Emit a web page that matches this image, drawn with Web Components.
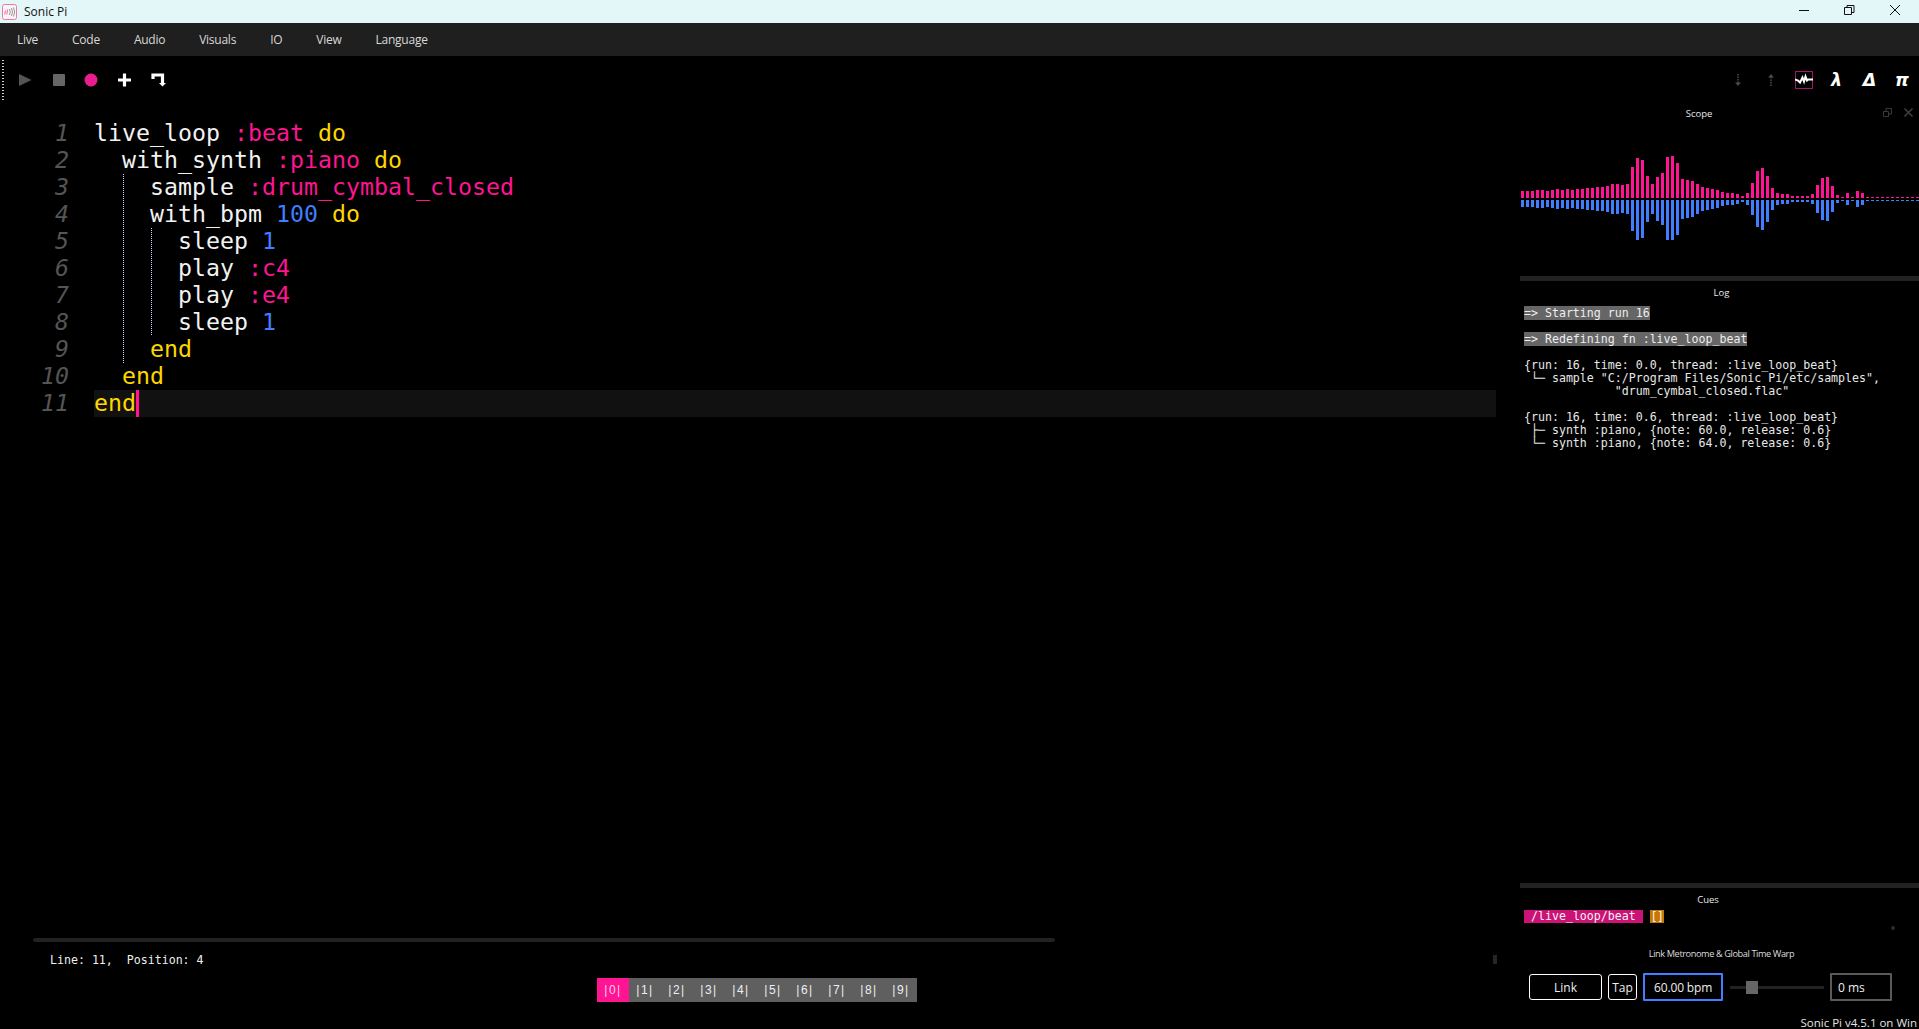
<!DOCTYPE html>
<html><head><meta charset="utf-8"><title>Sonic Pi</title>
<style>
html,body{margin:0;padding:0;height:100%;background:#000;overflow:hidden}
body{font-family:"Open Sans","Noto Sans",sans-serif}
</style></head><body>
<sp-app>
  <sp-titlebar slot="title">Sonic Pi</sp-titlebar>
  <sp-menubar slot="menu"><sp-menu>Live</sp-menu><sp-menu>Code</sp-menu><sp-menu>Audio</sp-menu><sp-menu>Visuals</sp-menu><sp-menu>IO</sp-menu><sp-menu>View</sp-menu><sp-menu>Language</sp-menu></sp-menubar>
  <sp-toolbar slot="tools"></sp-toolbar>
  <sp-editor slot="main">
    <sp-line n="1">live_loop <sp-tok k="sym">:beat</sp-tok> <sp-tok k="kw">do</sp-tok></sp-line>
    <sp-line n="2">  with_synth <sp-tok k="sym">:piano</sp-tok> <sp-tok k="kw">do</sp-tok></sp-line>
    <sp-line n="3">    sample <sp-tok k="sym">:drum_cymbal_closed</sp-tok></sp-line>
    <sp-line n="4">    with_bpm <sp-tok k="num">100</sp-tok> <sp-tok k="kw">do</sp-tok></sp-line>
    <sp-line n="5">      sleep <sp-tok k="num">1</sp-tok></sp-line>
    <sp-line n="6">      play <sp-tok k="sym">:c4</sp-tok></sp-line>
    <sp-line n="7">      play <sp-tok k="sym">:e4</sp-tok></sp-line>
    <sp-line n="8">      sleep <sp-tok k="num">1</sp-tok></sp-line>
    <sp-line n="9">    <sp-tok k="kw">end</sp-tok></sp-line>
    <sp-line n="10">  <sp-tok k="kw">end</sp-tok></sp-line>
    <sp-line n="11" active><sp-tok k="kw">end</sp-tok></sp-line>
  </sp-editor>
  <sp-side slot="side">
    <sp-scope></sp-scope>
    <sp-log></sp-log>
    <sp-cues></sp-cues>
    <sp-metronome></sp-metronome>
    <sp-version>Sonic Pi v4.5.1 on Win</sp-version>
  </sp-side>
</sp-app>
<script>
const MONO='"DejaVu Sans Mono","Liberation Mono",monospace';
const UI='"Open Sans","Noto Sans",sans-serif';
function def(name,html,init){
  customElements.define(name,class extends HTMLElement{
    constructor(){super();const t=document.createElement('template');t.innerHTML=html;
      this.attachShadow({mode:'open'}).appendChild(t.content.cloneNode(true));}
    connectedCallback(){if(init&&!this._i){this._i=1;init.call(this,this.shadowRoot);}}
  });
}
def('sp-app',`<style>
:host{display:grid;width:1919px;height:1029px;grid-template-columns:1520px 399px;grid-template-rows:23px 33px 48px 925px;background:#000;overflow:hidden}
::slotted([slot=title]),::slotted([slot=menu]),::slotted([slot=tools]){grid-column:1/3}
</style><slot name="title"></slot><slot name="menu"></slot><slot name="tools"></slot><slot name="main"></slot><slot name="side"></slot>`);

def('sp-titlebar',`<style>
:host{display:flex;align-items:center;background:#e4f7f8;color:#111;font:12px ${UI};height:23px}
.i{margin-left:2px;margin-right:7px;width:15px;height:16px;display:block;flex:none}
.t{flex:1}
svg{display:block}
</style>
<svg class="i" viewBox="0 0 15 16"><rect x=".5" y=".5" width="14" height="15" rx="2" fill="#fdf2f6" stroke="#e67ba6"/><path d="M3.500 6.500l-.8 4M5.600 5.500l-.8 5" stroke="#f06aa0" fill="none"/><path d="M7.500 5q1.500 3 0 6M9.500 4q2 4 0 8M11.500 3.500q2.400 4.500 0 9" stroke="#999" fill="none"/></svg>
<span class="t"><slot></slot></span>
<svg width="119" height="23" viewBox="0 0 119 23" fill="none" stroke="#111" stroke-width="1"><path d="M0 10.500h10"/><path d="M45.500 7.500h7v7h-7zM48 7V5.500h7v7h-2"/><path d="M91 5l10 10M101 5l-10 10"/></svg><span style="width:1px"></span>`);

def('sp-menubar',`<style>:host{display:flex;align-items:center;background:#1f1f1f;height:33px;padding-left:17px;gap:34px}</style><slot></slot>`);
def('sp-menu',`<style>:host{display:block;color:#d8d8d8;font:12px ${UI};letter-spacing:-.25px}</style><slot></slot>`);

def('sp-toolbar',`<style>
:host{display:flex;align-items:center;height:48px;position:relative}
.h{width:2px;height:41px;margin-left:2px;margin-right:15px;background:repeating-linear-gradient(#ccc 0 1px,#000 1px 3px)}
.l{display:flex;align-items:center;gap:0;flex:1}
svg{display:block}
.r{display:flex;align-items:center}
.g{font:italic bold 17.500px "DejaVu Sans",sans-serif;color:#fff;width:33px;text-align:center;line-height:17px}
</style>
<span class="h"></span>
<div class="l">
<svg width="150" height="16" viewBox="0 .5 150 16">
<path d="M0 2.500L12.500 8.500 0 14.500z" fill="#555"/>
<rect x="34" y="2.500" width="12" height="12" rx="1" fill="#666"/>
<circle cx="72" cy="8.500" r="6.500" fill="#e91e8c"/>
<path d="M99 8.500h13M105.500 2v13" stroke="#fff" stroke-width="3.200" fill="none"/>
<path d="M134 7.500V3.500h9.500v9" stroke="#fff" stroke-width="3.200" fill="none"/><path d="M140 11.500h7l-3.500 3.500z" fill="#fff"/>
</svg>
</div>
<div class="r">
<svg width="12" height="14" viewBox="0 0 12 14" style="margin-right:21px"><path d="M6 1v9" stroke="#4a4a4a" stroke-width="1.500" stroke-dasharray="1.500 1"/><path d="M3 9.500h6L6 13z" fill="#4a4a4a"/></svg>
<svg width="12" height="14" viewBox="0 0 12 14" style="margin-right:18px"><path d="M6 4v9" stroke="#4a4a4a" stroke-width="1.500" stroke-dasharray="1.500 1"/><path d="M3 4.500h6L6 1z" fill="#4a4a4a"/></svg>
<svg width="18" height="18" viewBox="0 0 18 18" style="margin-right:7px"><rect x=".5" y=".5" width="17" height="17" fill="none" stroke="#a5176f"/><path d="M0 8.500l3 1 2 2 2.500-5 1.500 4 1.500-5 1.500 4 1-1h5" fill="none" stroke="#fff" stroke-width="2"/></svg>
<span class="g">&#955;</span><span class="g">&#916;</span><span class="g" style="width:32px">&#960;</span>
<span style="width:1px"></span>
</div>`);

def('sp-editor',`<style>
:host{display:flex;flex-direction:column;min-width:0;height:925px;color:#f2f2f2}
.code{position:relative;padding:16px 24px 0 0;flex:1}
.guide{position:absolute;width:0;border-left:1px dotted #d0dcff}
.bar{height:4px;width:1022px;margin-left:33px;background:#222;border-radius:2px}
.st{font:11.600px/13px ${MONO};color:#eee;white-space:pre;margin:12px 0 0 50px;height:24px;display:flex}
.st span:first-child{flex:1}
.tabs{display:flex;align-items:center;margin-left:597px;height:24px;margin-bottom:27px;width:320px}
.hd{width:4px;height:9px;background:#262626;margin-right:23px;margin-top:1px}
</style>
<div class="code"><slot></slot>
<span class="guide" style="left:123px;top:70px;height:189px"></span>
<span class="guide" style="left:151px;top:124px;height:107px"></span>
</div>
<div class="bar"></div>
<div class="st"><span>Line: 11,  Position: 4</span><span class="hd"></span></div>
<div class="tabs"><sp-tab active>0</sp-tab><sp-tab>1</sp-tab><sp-tab>2</sp-tab><sp-tab>3</sp-tab><sp-tab>4</sp-tab><sp-tab>5</sp-tab><sp-tab>6</sp-tab><sp-tab>7</sp-tab><sp-tab>8</sp-tab><sp-tab>9</sp-tab></div>`);

def('sp-tab',`<style>
:host{display:block;width:32px;height:24px;background:#5f5f5f;color:#eee;text-align:center;font:12px/24px "Liberation Sans",sans-serif;letter-spacing:1.500px}
:host([active]){background:#ff1493;color:#ffd0e8}
</style>|<slot></slot>|`);

def('sp-line',`<style>
:host{display:flex;height:27px;font:23.250px/25px ${MONO};white-space:pre}
.n{width:69px;margin-right:25px;text-align:right;font-style:italic;color:#555;flex:none}
.c{flex:1;position:relative}
:host([active]) .c{background:#111}
.cur{display:none}
:host([active]) .cur{display:inline-block;width:2.500px;height:27px;background:#ff1493;vertical-align:top}
</style><span class="n"></span><span class="c"><slot></slot><span class="cur"></span></span>`,function(s){s.querySelector('.n').textContent=this.getAttribute('n');});

def('sp-tok',`<style>:host{display:inline}
:host([k=sym]){color:#ff1493}
:host([k=kw]){color:#ffd700}
:host([k=num]){color:#3f7fff}
</style><slot></slot>`);

def('sp-side',`<style>:host{display:flex;flex-direction:column;height:925px;min-width:0}</style><slot></slot>`);

const H=[21,21,21,24,24,21,24,27,24,27,24,27,27,30,30,33,33,36,42,42,39,42,93,120,114,66,42,63,75,123,126,105,57,54,51,42,33,30,27,24,18,15,15,12,6,15,45,81,90,66,30,15,12,12,6,6,6,6,12,39,60,63,36,9,3,15,3,21,15];
def('sp-scope',`<style>
:host{display:block;height:172px;position:relative}
.t{font:9.500px/19px ${UI};color:#e8e8e8;text-align:center;padding-right:41px;height:18px}
svg{display:block;margin-top:18px}
.b{position:absolute;right:6px;top:4px;display:flex;gap:12px}
</style><div class="t">Scope</div>
<div class="b"><svg style="margin:0" width="9" height="9" viewBox="0 0 9 9" fill="none" stroke="#3a3a3a"><path d="M.5 3.500h5v5h-5zM3 3V.5h5.500v5.500H6"/></svg><svg style="margin:0" width="9" height="9" viewBox="0 0 9 9" fill="none" stroke="#3a3a3a" stroke-width="1.600"><path d="M.5.500l8 8M8.500.5l-8 8"/></svg></div>
<svg id="w" width="399" height="100" viewBox="0 0 399 100"></svg>`,function(s){
  const svg=s.getElementById('w');let o='';
  for(let i=0;i*5+1<399;i++){const h=(H[i]||3)/3;const x=1+i*5;
    o+=`<rect x="${x}" y="${58-h}" width="3" height="${h}" fill="#ff1493"/><rect x="${x}" y="60" width="3" height="${h}" fill="#3f7fff"/>`;}
  svg.innerHTML=o;
});

def('sp-log',`<style>
:host{display:block;height:607px;box-sizing:border-box;border-top:5px solid #222;overflow:hidden}
.t{font:9.500px/24px ${UI};color:#e8e8e8;text-align:center;padding-left:4px;height:26px}
pre{margin:0 0 0 4px;font:11.600px/13px ${MONO};color:#e8e8e8}
.m{background:#666;color:#eee}
</style><div class="t">Log</div>
<pre><span class="m">=&gt; Starting run 16</span>

<span class="m">=&gt; Redefining fn :live_loop_beat</span>

{run: 16, time: 0.0, thread: :live_loop_beat}
 └─ sample "C:/Program Files/Sonic Pi/etc/samples",
             "drum_cymbal_closed.flac"

{run: 16, time: 0.6, thread: :live_loop_beat}
 ├─ synth :piano, {note: 60.0, release: 0.6}
 └─ synth :piano, {note: 64.0, release: 0.6}</pre>`);

def('sp-cues',`<style>
:host{display:block;height:53px;box-sizing:border-box;border-top:5px solid #222;position:relative}
.t{font:9.500px/23px ${UI};color:#e8e8e8;text-align:center;padding-right:23px;height:22px}
.r{display:flex;margin-left:4px;gap:7px;font:11.600px/13px ${MONO};color:#f4f4f4}
.a{background:#cc1177;width:112px;padding-left:7px;height:13px;white-space:pre}
.b{background:#c87800;width:14px;height:13px;text-align:center;letter-spacing:-.5px}
.d{position:absolute;left:371px;top:38px;width:4px;height:4px;border-radius:50%;background:#2c2c2c}
</style><div class="t">Cues</div><div class="r"><span class="a">/live_loop/beat</span><span class="b">[]</span></div><span class="d"></span>`);

def('sp-metronome',`<style>
:host{display:block;height:80px;font:12px ${UI};color:#eee;box-sizing:border-box;padding-top:9px}
.t{font:9.200px/18px ${UI};letter-spacing:-.4px;color:#ddd;text-align:center;padding-left:4px;height:18px}
.r{display:flex;align-items:center;margin:10px 0 0 9px;height:28px}
.btn{box-sizing:border-box;height:26px;border:1px solid #fff;border-radius:3px;display:flex;align-items:center;justify-content:center}
.box{box-sizing:border-box;height:28px;display:flex;align-items:center;border-width:2px;border-style:solid;border-radius:1px}
.s{width:94px;height:13px;margin:0 6px 0 7px;display:flex;padding-left:16px;box-sizing:border-box;background:linear-gradient(#222,#222) center/100% 3px no-repeat}
.s i{display:block;width:12px;height:13px;background:#666}
</style><div class="t">Link Metronome &amp; Global Time Warp</div>
<div class="r"><span class="btn" style="width:73px;margin-right:6px">Link</span><span class="btn" style="width:29px;margin-right:6px">Tap</span><span class="box" style="width:80px;border-color:#4080ff;padding-left:9px;letter-spacing:-.15px">60.00 bpm</span><span class="s"><i></i></span><span class="box" style="width:62px;border-color:#5a5a5a;padding-left:6px">0 ms</span></div>`);

def('sp-version',`<style>:host{display:block;font:11.500px/14px ${UI};color:#e4e4e4;text-align:right;padding-right:2px;height:13px;white-space:nowrap}</style><slot></slot>`);
</script>
</body></html>
